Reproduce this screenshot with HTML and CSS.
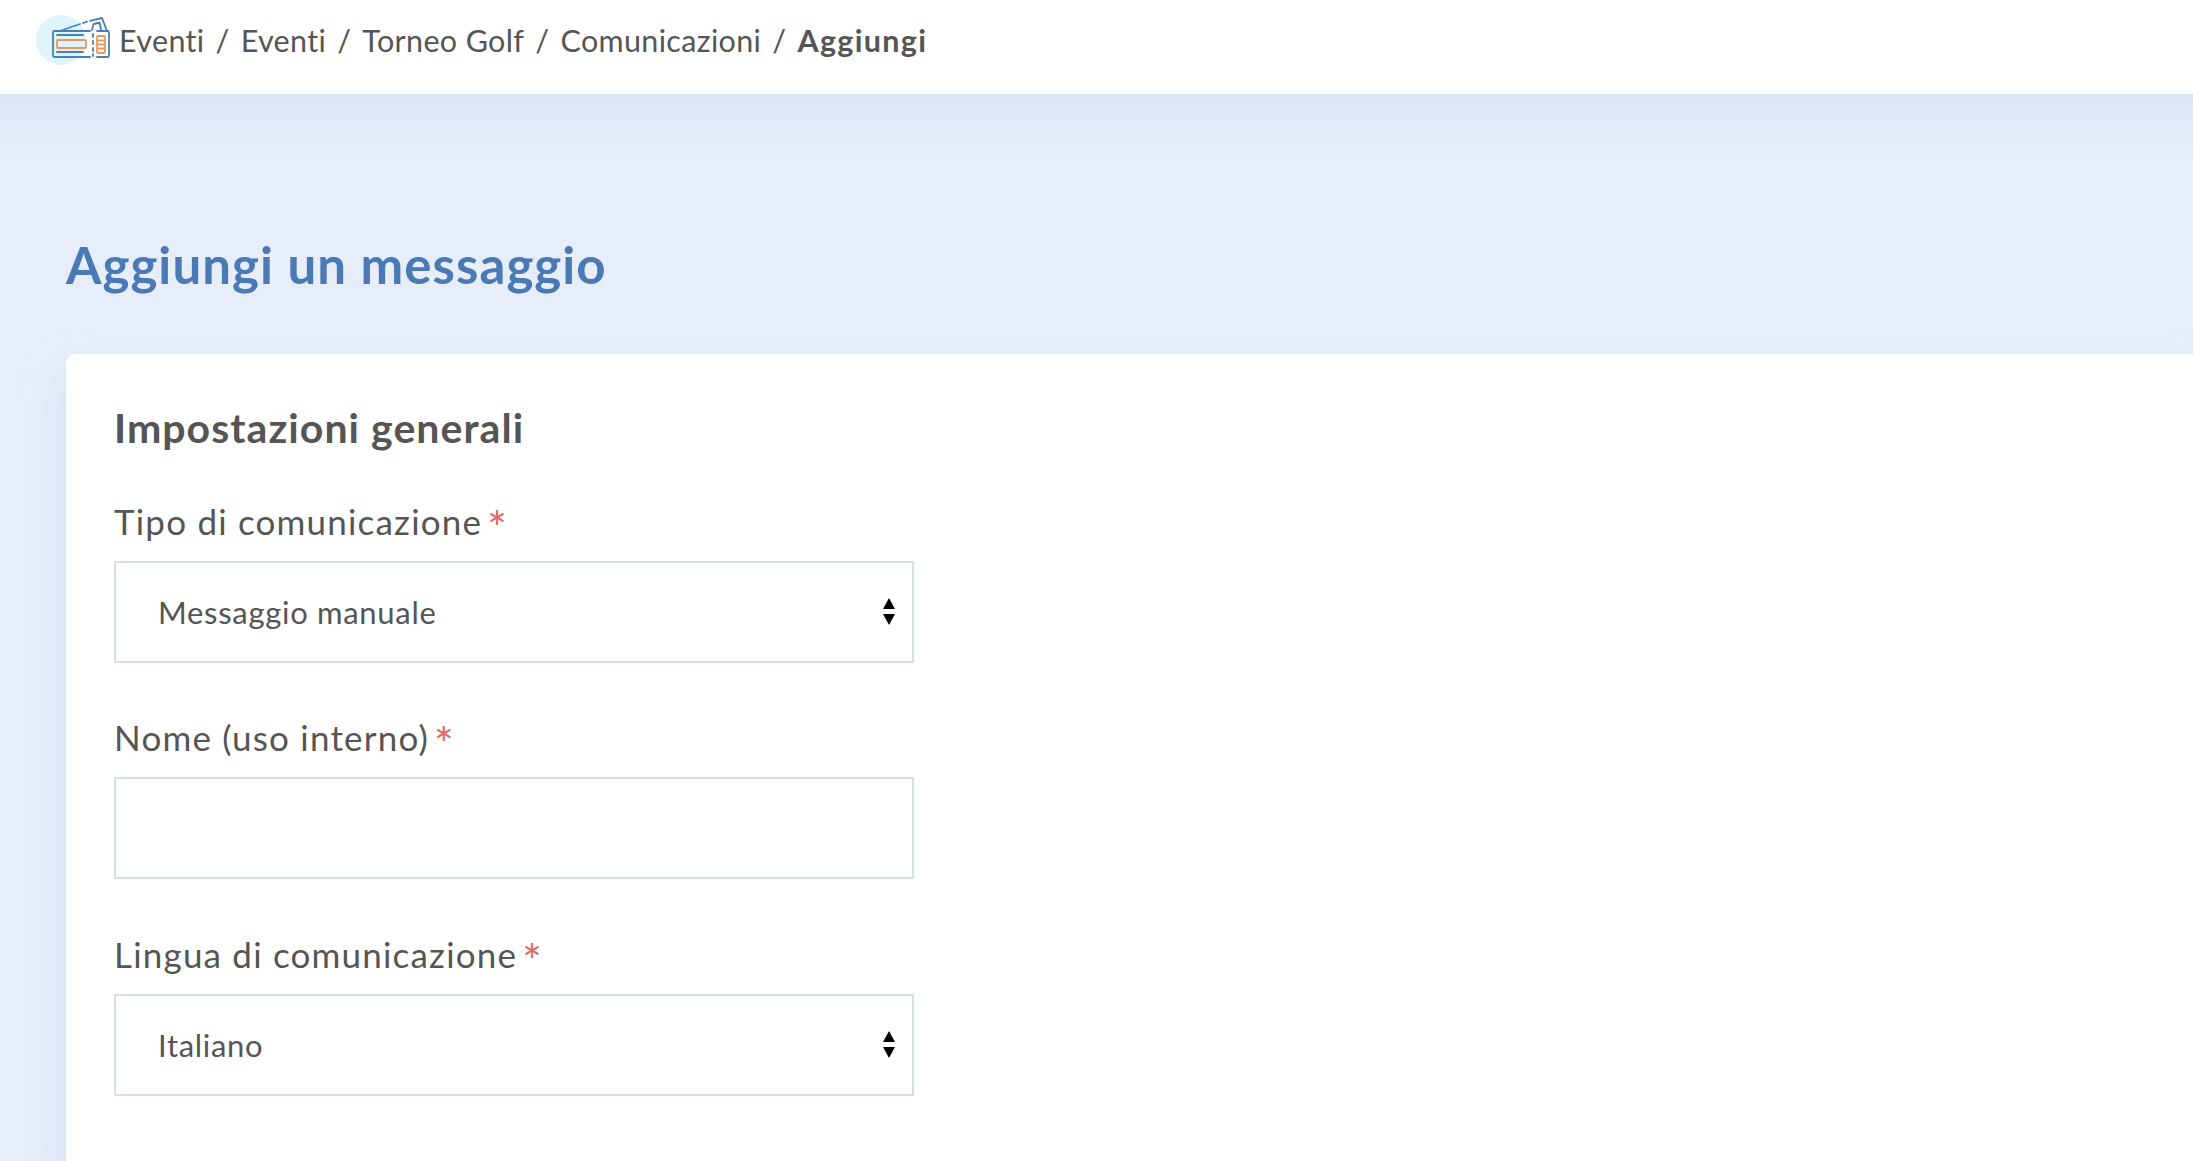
FILE: index.html
```html
<!DOCTYPE html>
<html lang="it">
<head>
<meta charset="utf-8">
<title>Aggiungi un messaggio</title>
<link rel="stylesheet" href="styles.css">
</head>
<body>
<header class="topbar">
  <svg class="logo" width="76" height="52" viewBox="0 0 76 52" aria-hidden="true">
    <circle cx="25" cy="25" r="25" fill="#dff4fc"/>
    <g fill="none" stroke="#4a7fb5" stroke-width="1.8" stroke-linejoin="round" stroke-linecap="round">
      <path d="M54 16H18.500a1.500 1.500 0 0 0-1.500 1.500v23a1.500 1.500 0 0 0 1.500 1.500H54M61 42h10.500a1.500 1.500 0 0 0 1.500-1.500v-23a1.500 1.500 0 0 0-1.500-1.500H61"/>
      <path d="M24 16 44 9M47 8l4-1.300M54 5.800 66 3l5 13"/>
      <path d="M56 15l1.500-6 6-1.500 1.500 7"/>
      <path d="M59.500 9a2.200 2.200 0 0 1 3-.5"/>
      <path d="M21 20h26M21 37h26"/>
      <path d="M57 19v3M57 26v3M57 33v3M57 39v2"/>
    </g>
    <g fill="none" stroke="#e8995a" stroke-width="1.8">
      <rect x="21" y="25" width="29" height="8" rx="1"/>
      <rect x="61" y="21" width="8" height="17" rx="1"/>
      <path d="M61 25.500h8M61 29.500h8M61 33.500h8"/>
    </g>
  </svg>
  <nav class="crumbs">
    <span>Eventi</span><span class="sep">/</span>
    <span>Eventi</span><span class="sep">/</span>
    <span>Torneo Golf</span><span class="sep">/</span>
    <span>Comunicazioni</span><span class="sep">/</span>
    <span class="current">Aggiungi</span>
  </nav>
</header>
<main class="content">
  <h1 class="title">Aggiungi un messaggio</h1>
  <section class="card">
    <h2 class="card-title">Impostazioni generali</h2>
    <div class="field">
      <label class="label" for="tipo">Tipo di comunicazione<span class="req">*</span></label>
      <div class="select-wrap">
        <select class="control" id="tipo"><option>Messaggio manuale</option></select>
        <svg class="arrows" width="14" height="27" viewBox="0 0 14 27" aria-hidden="true"><path d="M7 0l6 11H1zM1 16h12L7 27z" fill="#000"/></svg>
      </div>
    </div>
    <div class="field">
      <label class="label" for="nome">Nome (uso interno)<span class="req">*</span></label>
      <input class="control" id="nome" type="text">
    </div>
    <div class="field">
      <label class="label" for="lingua">Lingua di comunicazione<span class="req">*</span></label>
      <div class="select-wrap">
        <select class="control" id="lingua"><option>Italiano</option></select>
        <svg class="arrows" width="14" height="27" viewBox="0 0 14 27" aria-hidden="true"><path d="M7 0l6 11H1zM1 16h12L7 27z" fill="#000"/></svg>
      </div>
    </div>
  </section>
</main>
</body>
</html>
```
FILE: styles.css
```css
* { box-sizing: border-box; }
html, body { margin: 0; height: 100%; overflow: hidden; }
body {
  font-family: "Lato", "Noto Sans", sans-serif;
  color: #555;
  background: linear-gradient(#e0e6f6 94px, #e7edf9 170px);
}
.topbar {
  height: 94px;
  background: #fff;
  display: flex;
  align-items: center;
  padding-left: 36px;
  gap: 7px;
}
.logo { flex: none; margin-top: -12px; }
.crumbs { display: flex; align-items: center; gap: 11px; font-size: 30.5px; letter-spacing: .35px; margin-top: -15px; }
.current { font-weight: 700; letter-spacing: 1.3px; }
.content { padding: 133px 0 0 66px; }
.title { margin: 0 0 51px; font-size: 51px; line-height: 76px; font-weight: 700; letter-spacing: 1.05px; color: #4a7ab5; height: 76px; }
.card {
  background: #fff;
  border-radius: 10px 0 0 0;
  box-shadow: 0 24px 40px rgba(200, 212, 240, .5);
  padding: 48px 48px 0;
  height: 807px;
}
.card-title { margin: 0 0 45px; font-size: 41px; line-height: 52px; font-weight: 700; letter-spacing: 1.05px; color: #555; }
.field { width: 800px; margin-bottom: 52.4px; }
.label { display: block; font-size: 35px; line-height: 44px; margin-bottom: 18px; letter-spacing: 1.2px; color: #555; }
.req { color: #e0675f; margin-left: 5px; font-size: 46px; line-height: 30px; vertical-align: -10px; }
.select-wrap { position: relative; }
.control {
  display: block;
  width: 800px;
  height: 102px;
  border: 2px solid #d8dee8;
  border-radius: 0;
  background: #fff;
  font: inherit;
  font-size: 31px;
  letter-spacing: .7px;
  color: #555;
  padding: 0 42px;
  appearance: none;
  outline: none;
}
.arrows { position: absolute; right: 18px; top: 37px; }
```
